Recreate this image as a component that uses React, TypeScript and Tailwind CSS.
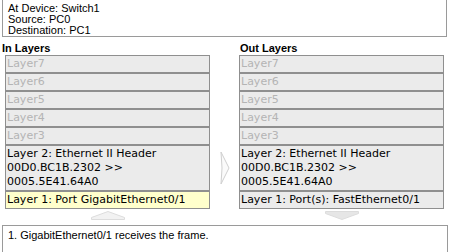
const sans = { fontFamily: '"Liberation Sans", Arial, sans-serif' }
const verdana = { fontFamily: '"DejaVu Sans", Verdana, sans-serif' }

interface LayerRow {
  inText: string[]
  outText: string[]
  active?: boolean
  inBg?: string
}

const rows: LayerRow[] = [
  { inText: ['Layer7'], outText: ['Layer7'] },
  { inText: ['Layer6'], outText: ['Layer6'] },
  { inText: ['Layer5'], outText: ['Layer5'] },
  { inText: ['Layer4'], outText: ['Layer4'] },
  { inText: ['Layer3'], outText: ['Layer3'] },
  {
    inText: ['Layer 2: Ethernet II Header', '00D0.BC1B.2302 >>', '0005.5E41.64A0'],
    outText: ['Layer 2: Ethernet II Header', '00D0.BC1B.2302 >>', '0005.5E41.64A0'],
    active: true,
  },
  {
    inText: ['Layer 1: Port GigabitEthernet0/1'],
    outText: ['Layer 1: Port(s): FastEthernet0/1'],
    active: true,
    inBg: 'yellow',
  },
]

function LayerBox({ lines, active, yellow }: { lines: string[]; active?: boolean; yellow?: boolean }) {
  return (
    <div
      className={`w-[205px] border border-[#8f8f8f] px-[1px] py-px text-[11px] leading-[14px] ${
        yellow ? 'bg-[#ffffcc]' : 'bg-[#ebebeb]'
      } ${active ? 'text-black' : 'text-[#b4b4b4]'}`}
      style={verdana}
    >
      {lines.map((l) => (
        <div key={l} className="whitespace-nowrap">
          {l}
        </div>
      ))}
    </div>
  )
}

export default function App() {
  return (
    <div className="w-[449px] h-[252px] overflow-hidden bg-white text-black" style={sans}>
      <div className="ml-[2px] w-[445px] border border-t-0 border-[#9a9a9a] pl-[5px] pt-[3px] text-[11px] leading-[11px]">
        <div>At Device: Switch1</div>
        <div>Source: PC0</div>
        <div>Destination: PC1</div>
      </div>

      <div className="mt-[6px] flex text-[11px] leading-[11px] font-bold">
        <div className="w-[240px] pl-[2px]">In Layers</div>
        <div>Out Layers</div>
      </div>

      <div className="mt-px ml-[5px] flex flex-col">
        {rows.map((r, i) => (
          <div key={i} className="flex">
            <LayerBox lines={r.inText} active={r.active} yellow={r.inBg === 'yellow'} />
            <div className="w-[29px] flex items-center justify-center">
              {r.inText.length > 1 && (
                <svg width="12" height="34" viewBox="0 0 12 34">
                  <polygon points="2,1 10,17 2,33 3,17" fill="#fafafa" stroke="#cfcfcf" strokeWidth="1" />
                </svg>
              )}
            </div>
            <LayerBox lines={r.outText} active={r.active} />
          </div>
        ))}
      </div>

      <div className="mt-px ml-[5px] flex h-[10px] items-center">
        <div className="w-[205px] flex justify-center">
          <svg width="34" height="9" viewBox="0 0 34 9">
            <polygon points="0.5,8.5 0.5,6.5 17,0.5 33.5,6.5 33.5,8.5" fill="#f2f2f2" stroke="#dcdcdc" />
          </svg>
        </div>
        <div className="w-[29px]" />
        <div className="w-[205px] flex justify-center">
          <svg width="34" height="9" viewBox="0 0 34 9">
            <polygon points="0.5,0.5 33.5,0.5 33.5,2.5 17,8.5 0.5,2.5" fill="#e6e6e6" stroke="#dcdcdc" />
          </svg>
        </div>
      </div>

      <div className="mt-[5px] ml-[2px] w-[446px] h-[40px] border border-[#9a9a9a] pl-[5px] pt-[3px] text-[11px] leading-[13px]">
        1. GigabitEthernet0/1 receives the frame.
      </div>
    </div>
  )
}
